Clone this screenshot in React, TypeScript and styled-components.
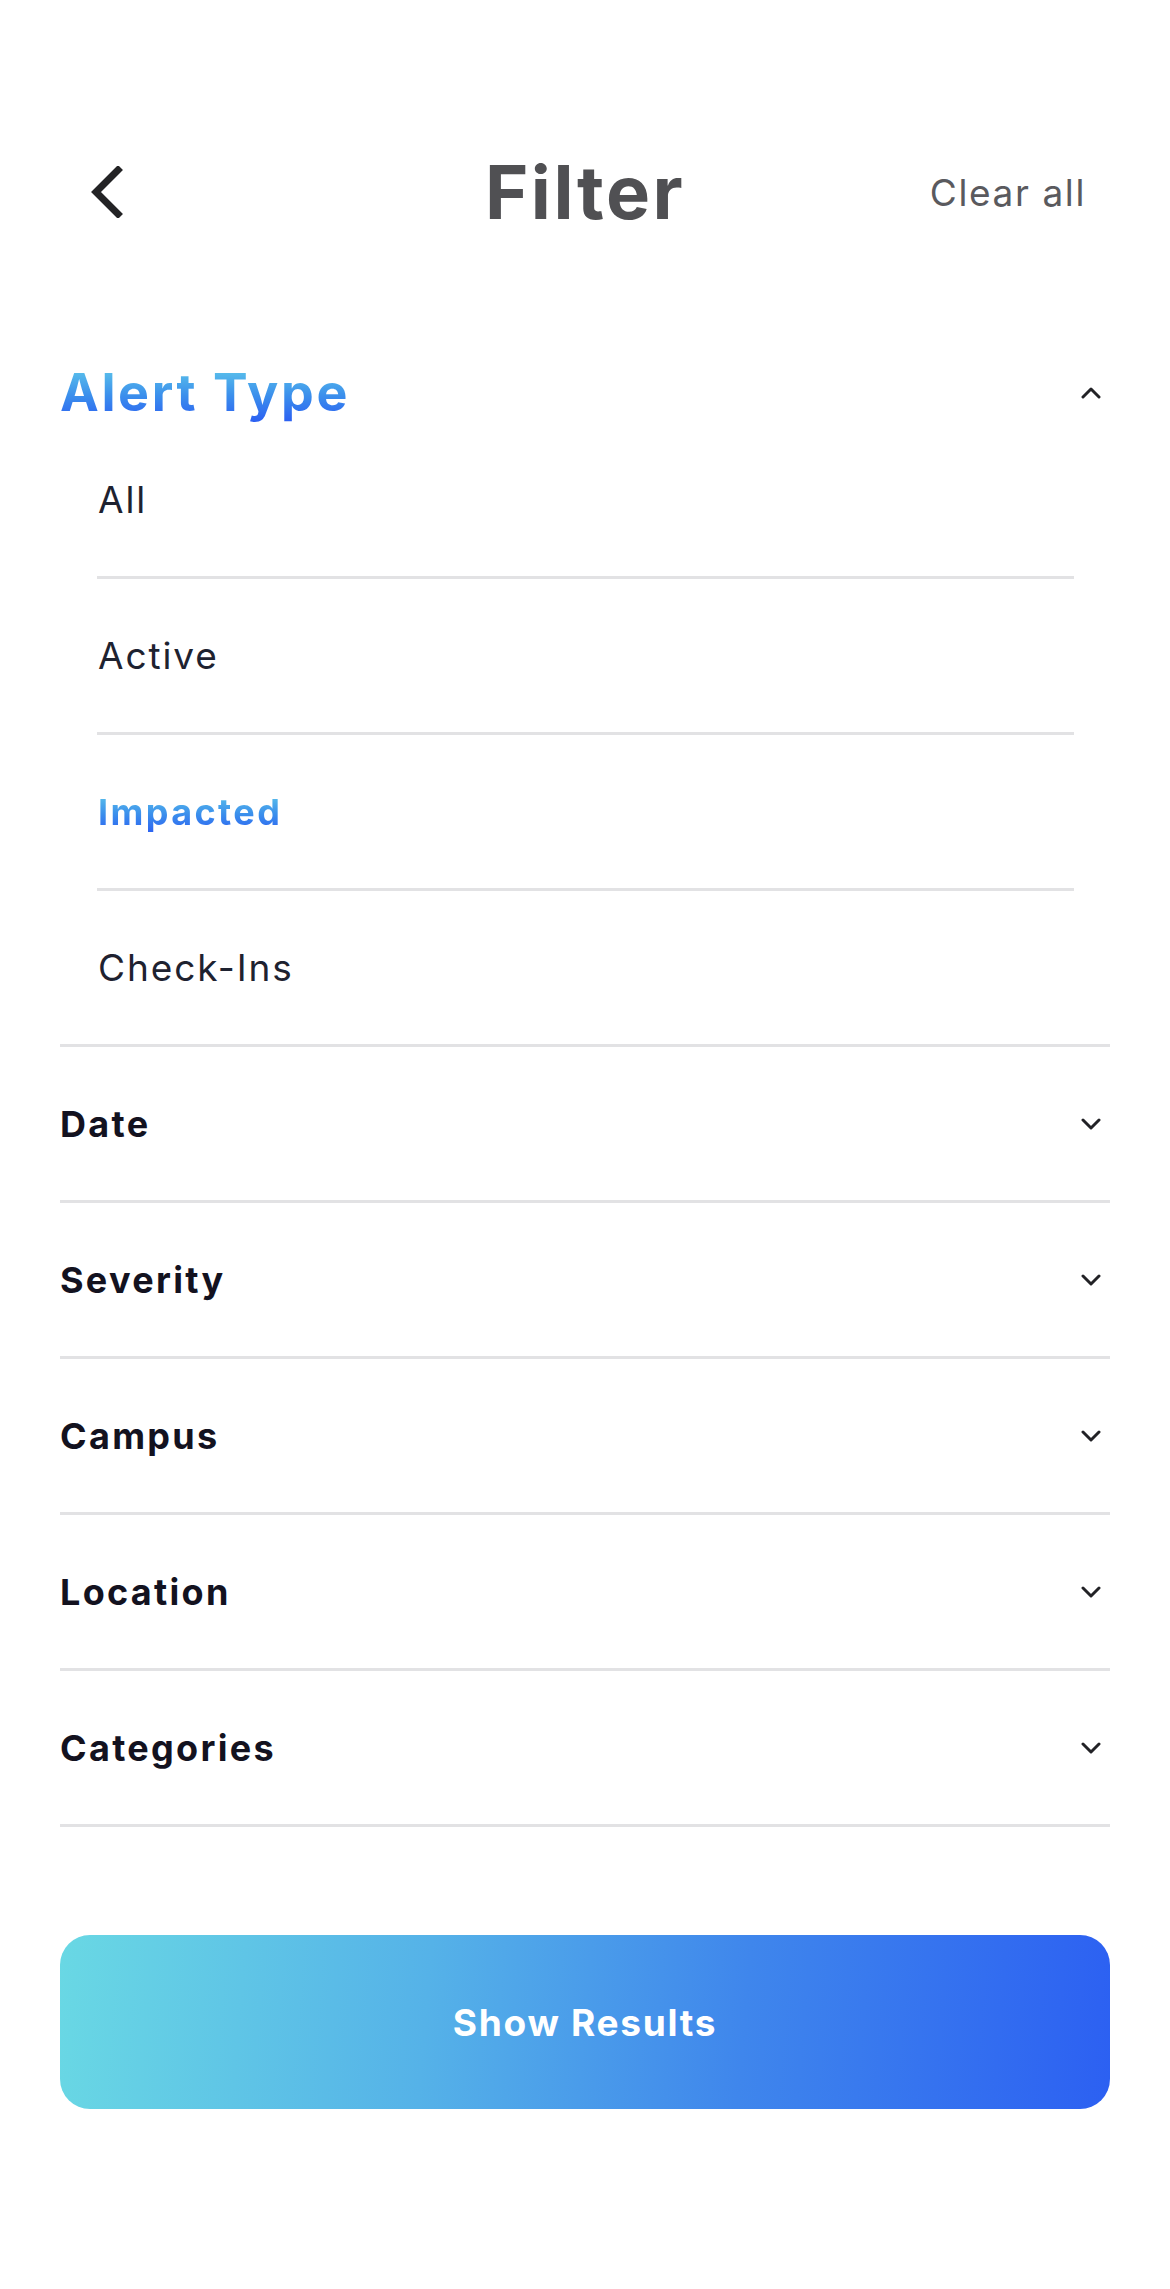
import React from "react";
import styled, { createGlobalStyle } from "styled-components";

const GlobalStyle = createGlobalStyle`
  html, body { margin: 0; padding: 0; background: #ffffff; }
  body { font-family: Inter, "Noto Sans", sans-serif; -webkit-font-smoothing: antialiased; }
  * { box-sizing: border-box; }
`;

const Page = styled.div`
  width: 1170px;
  min-height: 2289px;
  padding: 120px 60px 0 60px;
  display: flex;
  flex-direction: column;
`;

const Header = styled.header`
  height: 144px;
  display: grid;
  grid-template-columns: 1fr auto 1fr;
  align-items: center;
`;

const BackButton = styled.button`
  justify-self: start;
  margin-left: 30px;
  padding: 0;
  border: none;
  background: none;
  display: flex;
  align-items: center;
  cursor: pointer;
`;

const Title = styled.h1`
  margin: 0;
  font-size: 74px;
  font-weight: 700;
  color: #505053;
  letter-spacing: 2.5px;
`;

const ClearAll = styled.button`
  justify-self: end;
  margin-right: 24px;
  padding: 0;
  border: none;
  background: none;
  font-family: inherit;
  font-size: 37px;
  font-weight: 400;
  letter-spacing: 1.6px;
  color: #5a5a5e;
  cursor: pointer;
`;

const Section = styled.section<{ $first?: boolean }>`
  border-bottom: 3px solid #e2e2e4;
  margin-top: ${(p) => (p.$first ? "98px" : "0")};
`;

const SectionHeader = styled.div<{ $open?: boolean }>`
  height: ${(p) => (p.$open ? "61px" : "153px")};
  display: flex;
  align-items: center;
  justify-content: space-between;
  padding-right: 9px;
`;

const GradientText = styled.span`
  background: linear-gradient(180deg, #62cdea 0%, #3b8fec 55%, #2b5ff2 100%);
  -webkit-background-clip: text;
  background-clip: text;
  color: transparent;
`;

const OpenTitle = styled(GradientText)`
  font-size: 52px;
  font-weight: 700;
  letter-spacing: 2.6px;
  line-height: 1.15;
`;

const SectionTitle = styled.span`
  font-size: 36px;
  font-weight: 700;
  letter-spacing: 2.3px;
  color: #13121f;
`;

const ItemList = styled.ul`
  list-style: none;
  margin: 0;
  padding: 0 36px 0 37px;
`;

const Item = styled.li<{ $last?: boolean }>`
  height: ${(p) => (p.$last ? "153px" : "156px")};
  display: flex;
  align-items: center;
  border-bottom: ${(p) => (p.$last ? "none" : "3px solid #e2e2e4")};
  padding-left: 1px;
  font-size: 37px;
  font-weight: 400;
  letter-spacing: 1.9px;
  color: #1e2230;
`;

const SelectedLabel = styled(GradientText)`
  font-weight: 700;
  font-size: 36px;
  letter-spacing: 2.4px;
`;

const ShowResults = styled.button`
  margin-top: 108px;
  height: 174px;
  width: 100%;
  border: none;
  border-radius: 30px;
  background: linear-gradient(95deg, #69d8e4 0%, #55b2e8 35%, #3f86ec 65%, #2c60f2 100%);
  color: #ffffff;
  font-family: inherit;
  font-size: 37px;
  font-weight: 700;
  letter-spacing: 1.7px;
  cursor: pointer;
`;

const Chevron: React.FC<{ up?: boolean }> = ({ up }) => (
  <svg width="20" height="14" viewBox="0 0 20 14" fill="none">
    <path
      d={up ? "M2 11 L10 3 L18 11" : "M2 3 L10 11 L18 3"}
      stroke="#222226"
      strokeWidth="3"
      strokeLinecap="round"
      strokeLinejoin="round"
    />
  </svg>
);

const BackIcon = () => (
  <svg width="34" height="52" viewBox="0 0 34 52" fill="none">
    <path d="M28 4 L6 26 L28 48" stroke="#232325" strokeWidth="7" strokeLinecap="square" />
  </svg>
);

const alertTypes = ["All", "Active", "Impacted", "Check-Ins"];
const selected = "Impacted";
const collapsed = ["Date", "Severity", "Campus", "Location", "Categories"];

export default function App() {
  return (
    <>
      <GlobalStyle />
      <Page>
        <Header>
          <BackButton aria-label="Back">
            <BackIcon />
          </BackButton>
          <Title>Filter</Title>
          <ClearAll>Clear all</ClearAll>
        </Header>

        <Section $first>
          <SectionHeader $open>
            <OpenTitle>Alert Type</OpenTitle>
            <Chevron up />
          </SectionHeader>
          <ItemList>
            {alertTypes.map((t, i) => (
              <Item key={t} $last={i === alertTypes.length - 1}>
                {t === selected ? <SelectedLabel>{t}</SelectedLabel> : t}
              </Item>
            ))}
          </ItemList>
        </Section>

        {collapsed.map((c) => (
          <Section key={c}>
            <SectionHeader>
              <SectionTitle>{c}</SectionTitle>
              <Chevron />
            </SectionHeader>
          </Section>
        ))}

        <ShowResults>Show Results</ShowResults>
      </Page>
    </>
  );
}
